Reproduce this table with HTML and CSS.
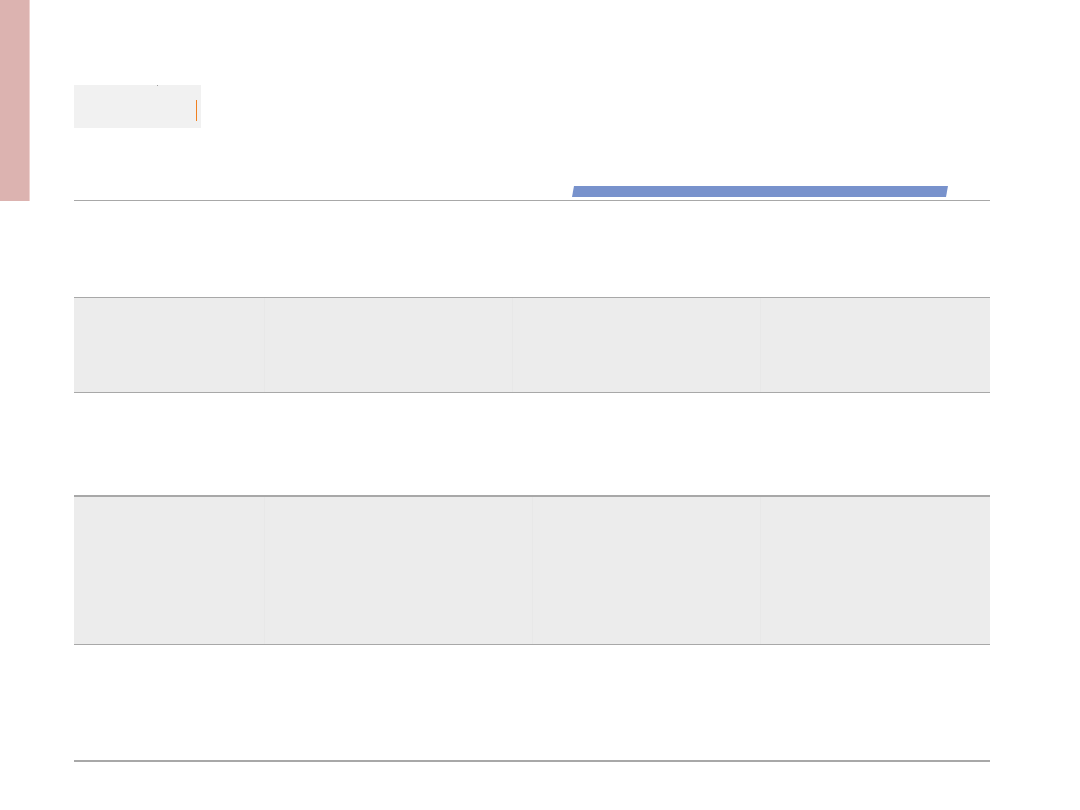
FILE: index.html
```html
<!DOCTYPE html>
<html lang="en">
<head>
<meta charset="utf-8">
<title>Table</title>
<link rel="stylesheet" href="styles.css">
</head>
<body>
<div class="page">
  <aside class="sidebar"></aside>
  <main class="main">
    <div class="search">
      <span class="search-dot"></span>
      <span class="caret"></span>
    </div>
    <div class="head">
      <div class="head-bar"></div>
    </div>
    <div class="row row-a"><div class="cell"></div><div class="cell"></div><div class="cell"></div><div class="cell"></div></div>
    <div class="row row-b shaded"><div class="cell"></div><div class="cell"></div><div class="cell"></div><div class="cell"></div></div>
    <div class="row row-c"><div class="cell"></div><div class="cell"></div><div class="cell"></div><div class="cell"></div></div>
    <div class="row row-d shaded thick"><div class="cell"></div><div class="cell"></div><div class="cell"></div><div class="cell"></div></div>
    <div class="row row-e"><div class="cell"></div><div class="cell"></div><div class="cell"></div><div class="cell"></div></div>
    <div class="table-end"></div>
  </main>
</div>
</body>
</html>
```

FILE: styles.css
```css
html, body {
  margin: 0;
  padding: 0;
  background: #ffffff;
  font-family: "Liberation Sans", Arial, sans-serif;
}

.page {
  display: flex;
  align-items: flex-start;
  width: 1080px;
  height: 810px;
}

.sidebar {
  flex: 0 0 29px;
  height: 201px;
  background: #dcb3b0;
  border-right: 1px solid #efd2d0;
}

.main {
  margin-left: 44px;
  width: 916px;
  display: flex;
  flex-direction: column;
}

.search {
  position: relative;
  margin-top: 85px;
  width: 127px;
  height: 43px;
  background: #f1f1f1;
  display: flex;
  justify-content: flex-end;
  align-items: flex-start;
  box-sizing: border-box;
  padding-right: 4px;
  padding-top: 15px;
}

.search-dot {
  position: absolute;
  left: 83px;
  top: 0;
  width: 1px;
  height: 1px;
  background: #a0a0a0;
}

.caret {
  display: block;
  width: 1px;
  height: 21px;
  background: #f08020;
}

.head {
  height: 72px;
  display: flex;
  align-items: flex-end;
  padding-bottom: 3px;
  box-sizing: border-box;
}

.head-bar {
  margin-left: 499px;
  width: 374px;
  height: 11px;
  background: #7892cc;
  transform: skewX(-10deg);
}

.row {
  display: grid;
  border-top: 1px solid #a8a8a8;
  box-sizing: border-box;
}

.row.thick {
  border-top-width: 2px;
}

.shaded {
  background: #ececec;
}

.cell {
  border-left: 1px solid #e8e8e8;
}

.cell:first-child {
  border-left: 0;
}

.row:not(.shaded) .cell {
  border-left-color: transparent;
}

.row-a { height: 97px; grid-template-columns: 190px 248px 248px 230px; }
.row-b { height: 95px; grid-template-columns: 190px 248px 248px 230px; }
.row-c { height: 103px; grid-template-columns: 190px 248px 248px 230px; }
.row-d { height: 149px; grid-template-columns: 190px 268px 228px 230px; }
.row-e { height: 116px; grid-template-columns: 190px 268px 228px 230px; }

.table-end {
  height: 0;
  border-top: 2px solid #a8a8a8;
}
```
